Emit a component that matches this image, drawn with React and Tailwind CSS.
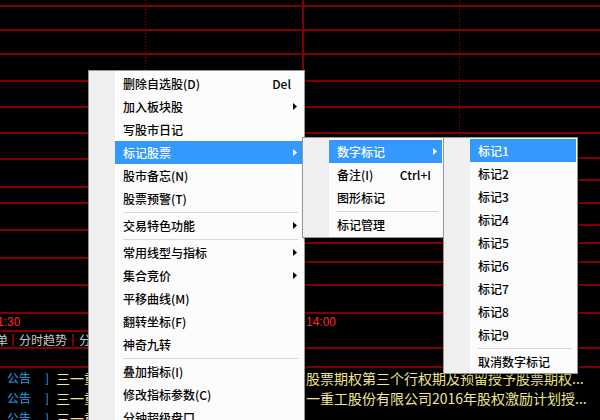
import React from 'react';

const Arrow = ({ white }) => (
  <svg width="4" height="7" viewBox="0 0 4 7">
    <path d="M0 0L4 3.5L0 7Z" fill={white ? '#ffffff' : '#000000'} />
  </svg>
);

// 右键菜单（主菜单 + 两级子菜单）
const Menu = ({ items, className }) => (
  <div
    className={`absolute border border-[#979797] bg-[linear-gradient(to_right,#f0f0f0_26px,#fcfcfc_26px)] text-[12px] font-medium leading-none shadow-[2px_2px_3px_rgba(0,0,0,0.35)] ${className}`}
  >
    {items.map((it, i) =>
      it.sep ? (
        <div key={i} className="ml-[34px] mr-[4px] flex h-[4px] items-center">
          <div className="h-px w-full bg-[#d7d7d7]" />
        </div>
      ) : (
        <div
          key={i}
          className={`ml-[26px] flex h-[23px] items-center pl-2 pr-[5px] whitespace-nowrap ${
            it.hl ? 'bg-[#3399ff] text-white' : 'text-black'
          }`}
        >
          <span className="flex-1">{it.label}</span>
          {it.key && <span className="mr-[2px]">{it.key}</span>}
          <span className="flex w-[4px]">{it.sub && <Arrow white={it.hl} />}</span>
        </div>
      )
    )}
  </div>
);

const mainItems = [
  { label: '删除自选股(D)', key: 'Del' },
  { label: '加入板块股', sub: true },
  { label: '写股市日记' },
  { label: '标记股票', sub: true, hl: true },
  { label: '股市备忘(N)' },
  { label: '股票预警(T)' },
  { sep: true },
  { label: '交易特色功能', sub: true },
  { sep: true },
  { label: '常用线型与指标', sub: true },
  { label: '集合竞价', sub: true },
  { label: '平移曲线(M)' },
  { label: '翻转坐标(F)' },
  { label: '神奇九转' },
  { sep: true },
  { label: '叠加指标(I)' },
  { label: '修改指标参数(C)' },
  { label: '分钟超级盘口' },
];

const markItems = [
  { label: '数字标记', sub: true, hl: true },
  { label: '备注(I)', key: 'Ctrl+I' },
  { label: '图形标记' },
  { sep: true },
  { label: '标记管理' },
];

const numItems = [
  { label: '标记1', hl: true },
  { label: '标记2' },
  { label: '标记3' },
  { label: '标记4' },
  { label: '标记5' },
  { label: '标记6' },
  { label: '标记7' },
  { label: '标记8' },
  { label: '标记9' },
  { sep: true },
  { label: '取消数字标记' },
];

const news = [
  { left: '三一重工：关于公司', right: '股票期权第三个行权期及预留授予股票期权...' },
  { left: '三一重工：三', right: '一重工股份有限公司2016年股权激励计划授...' },
  { left: '三一重工：关于', right: '' },
];

const commonLines = [6, 30, 54, 81, 107, 133];
const leftLines = [159, 187, 203, 230, 258, 285];
const rightLines = [158, 180, 203, 225, 243, 262, 285];

export default function App() {
  return (
    <div className="relative h-[420px] w-[600px] overflow-hidden bg-black font-['Noto_Sans_CJK_SC','Liberation_Sans',sans-serif]">
      {/* 分时图网格 */}
      <svg width="600" height="312" className="block">
        {commonLines.map((y) => (
          <line key={'c' + y} x1="0" x2="600" y1={y} y2={y} stroke="#800000" strokeWidth="2" />
        ))}
        {leftLines.map((y) => (
          <line key={'l' + y} x1="0" x2="303" y1={y} y2={y} stroke="#800000" strokeWidth="2" />
        ))}
        {rightLines.map((y) => (
          <line key={'r' + y} x1="303" x2="600" y1={y} y2={y} stroke="#800000" strokeWidth="2" />
        ))}
        <line x1="303" x2="303" y1="0" y2="312" stroke="#800000" strokeWidth="2" />
        <line x1="145.5" x2="145.5" y1="0" y2="312" stroke="#a00000" strokeWidth="1" strokeDasharray="1 2" />
        <line x1="459.5" x2="459.5" y1="0" y2="312" stroke="#a00000" strokeWidth="1" strokeDasharray="1 2" />
      </svg>

      {/* 时间轴 */}
      <div className="flex h-[18px] items-center border-t-2 border-[#800000] font-['Liberation_Sans',sans-serif] text-[12px] text-[#ff2a2a]">
        <div className="w-[306px]">
          <span className="-ml-[3px]">1:30</span>
        </div>
        <div>14:00</div>
      </div>

      {/* 标签栏 */}
      <div className="flex h-[17px]">
        <div className="flex w-[240px] items-center border-t-2 border-[#800000] text-[12px] leading-none text-[#c8c8c8] whitespace-nowrap">
          <div className="flex w-[12px] justify-end pr-[4px]">
            <span>单</span>
          </div>
          <div className="border-l-2 border-[#800000] px-[5px]">分时趋势</div>
          <div className="border-l-2 border-[#800000] px-[5px]">分笔成交</div>
        </div>
      </div>

      <div className="h-[19px] border-t-2 border-[#800000]" />

      {/* 公告 */}
      <div className="border-t-2 border-[#800000]">
        {news.map((n, i) => (
          <div key={i} className="flex h-[20px] items-center whitespace-nowrap">
            <div className="flex w-[306px] items-center overflow-hidden">
              <span className="ml-[7px] text-[12px] text-[#2b9fe6]">公告</span>
              <span className="ml-[14px] text-[12px] text-[#2b9fe6]">]</span>
              <span className="ml-[7px] text-[14px] text-[#f0e68c]">{n.left}</span>
            </div>
            <div className="flex-1 overflow-hidden text-[14px] text-[#f0e68c]">{n.right}</div>
          </div>
        ))}
      </div>

      <Menu items={mainItems} className="left-[88px] top-[70px] z-10 w-[217px] pr-[2px] pt-px" />
      <Menu items={markItems} className="left-[302px] top-[137px] z-20 w-[143px] pb-px pr-[2px] pt-[2px]" />
      <Menu items={numItems} className="left-[443px] top-[137px] z-30 w-[135px] pr-px pt-px" />
    </div>
  );
}
